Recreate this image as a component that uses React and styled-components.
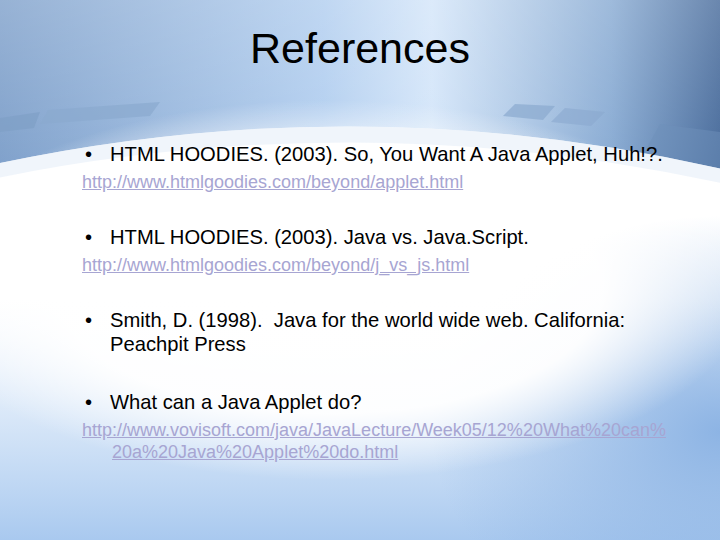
import React from "react";
import styled, { createGlobalStyle } from "styled-components";

const Global = createGlobalStyle`
  html, body { margin: 0; padding: 0; }
  body { font-family: "Liberation Sans", Arial, sans-serif; }
`;

const Slide = styled.div`
  position: relative;
  width: 720px;
  height: 540px;
  overflow: hidden;
  background: #ffffff;
`;

const Backdrop = styled.svg`
  position: absolute;
  inset: 0;
  z-index: 0;
`;

const Content = styled.div`
  position: relative;
  z-index: 1;
  padding: 22px 0 0 0;
`;

const Title = styled.h1`
  margin: 0;
  text-align: center;
  font-weight: normal;
  font-size: 43px;
  line-height: 52px;
  color: #000;
`;

const List = styled.div`
  width: 593px;
  padding: 68px 0 0 82px;
  display: flex;
  flex-direction: column;
`;

const Item = styled.div`
  display: flex;
  font-size: 20.2px;
  line-height: 24px;
  color: #000;
  margin-top: ${(p) => p.$gap}px;
`;

const Bullet = styled.span`
  width: 28px;
  flex: none;
  padding-left: 3px;
  box-sizing: border-box;
`;

const Link = styled.a`
  display: block;
  font-size: 18px;
  line-height: 22px;
  color: #a7a5d2;
  text-decoration: underline;
  padding-left: 30px;
  text-indent: -30px;
  word-break: break-all;
  margin-top: 5px;
`;

const refs = [
  { t: "HTML HOODIES. (2003). So, You Want A Java Applet, Huh!?.", l: "http://www.htmlgoodies.com/beyond/applet.html", g: 0 },
  { t: "HTML HOODIES. (2003). Java vs. Java.Script.", l: "http://www.htmlgoodies.com/beyond/j_vs_js.html", g: 32 },
  { t: "Smith, D. (1998).\u00a0 Java for the world wide web. California: Peachpit Press", g: 32 },
  { t: "What can a Java Applet do?", l: "http://www.vovisoft.com/java/JavaLecture/Week05/12%20What%20can%20a%20Java%20Applet%20do.html", g: 34 },
];

export default function App() {
  return (
    <>
      <Global />
      <Slide>
        <Backdrop width="720" height="540" viewBox="0 0 720 540">
          <defs>
            <linearGradient id="top" x1="0" y1="0" x2="1" y2="0">
              <stop offset="0" stopColor="#7d9fca" />
              <stop offset="0.45" stopColor="#b0cdef" />
              <stop offset="0.6" stopColor="#d3e5f9" />
              <stop offset="0.85" stopColor="#86a9d2" />
              <stop offset="1" stopColor="#45699a" />
            </linearGradient>
            <linearGradient id="fade" x1="0" y1="0" x2="0" y2="1">
              <stop offset="0" stopColor="#fff" stopOpacity="0.2" />
              <stop offset="1" stopColor="#fff" stopOpacity="0" />
            </linearGradient>
            <linearGradient id="bot" x1="0" y1="0" x2="0" y2="1">
              <stop offset="0" stopColor="#b5d2f3" stopOpacity="0" />
              <stop offset="1" stopColor="#a9c9ef" stopOpacity="1" />
            </linearGradient>
            <radialGradient id="br" cx="1" cy="0.8" r="0.4">
              <stop offset="0" stopColor="#8db4e4" />
              <stop offset="1" stopColor="#8db4e4" stopOpacity="0" />
            </radialGradient>
            <radialGradient id="glow" cx="0.5" cy="0.5" r="0.5">
              <stop offset="0" stopColor="#fff" />
              <stop offset="0.65" stopColor="#fff" stopOpacity="0.95" />
              <stop offset="1" stopColor="#fff" stopOpacity="0" />
            </radialGradient>
          </defs>
          <rect x="0" y="0" width="720" height="190" fill="url(#top)" />
          <rect x="0" y="0" width="720" height="190" fill="url(#fade)" />
          <path d="M0 118 L40 112 L34 128 L0 132 Z" fill="#7f9fc6" opacity="0.7" />
          <path d="M48 110 L160 102 L150 116 L40 124 Z" fill="#8aa9cf" opacity="0.7" />
          <path d="M515 104 L555 106 L543 120 L503 116 Z" fill="#8aa9cf" opacity="0.7" />
          <path d="M565 108 L605 112 L591 126 L551 122 Z" fill="#8aa9cf" opacity="0.6" />
          <path d="M660 124 L720 132 L720 170 L640 160 Z" fill="#6d8fba" opacity="0.5" />
          <path d="M-40 172 Q360 78 760 178 L760 540 L-40 540 Z" fill="#ffffff" />
          <rect x="0" y="300" width="720" height="240" fill="url(#bot)" />
          <rect x="0" y="0" width="720" height="540" fill="url(#br)" />
          <ellipse cx="330" cy="290" rx="420" ry="190" fill="url(#glow)" />
          <path d="M-40 172 Q360 78 760 178 L760 192 Q360 96 -40 186 Z" fill="#e6eef8" opacity="0.6" />
        </Backdrop>
        <Content>
          <Title>References</Title>
          <List>
            {refs.map((r, i) => (
              <React.Fragment key={i}>
                <Item $gap={r.g}>
                  <Bullet>•</Bullet>
                  <span>{r.t}</span>
                </Item>
                {r.l && <Link href={r.l}>{r.l}</Link>}
              </React.Fragment>
            ))}
          </List>
        </Content>
      </Slide>
    </>
  );
}
